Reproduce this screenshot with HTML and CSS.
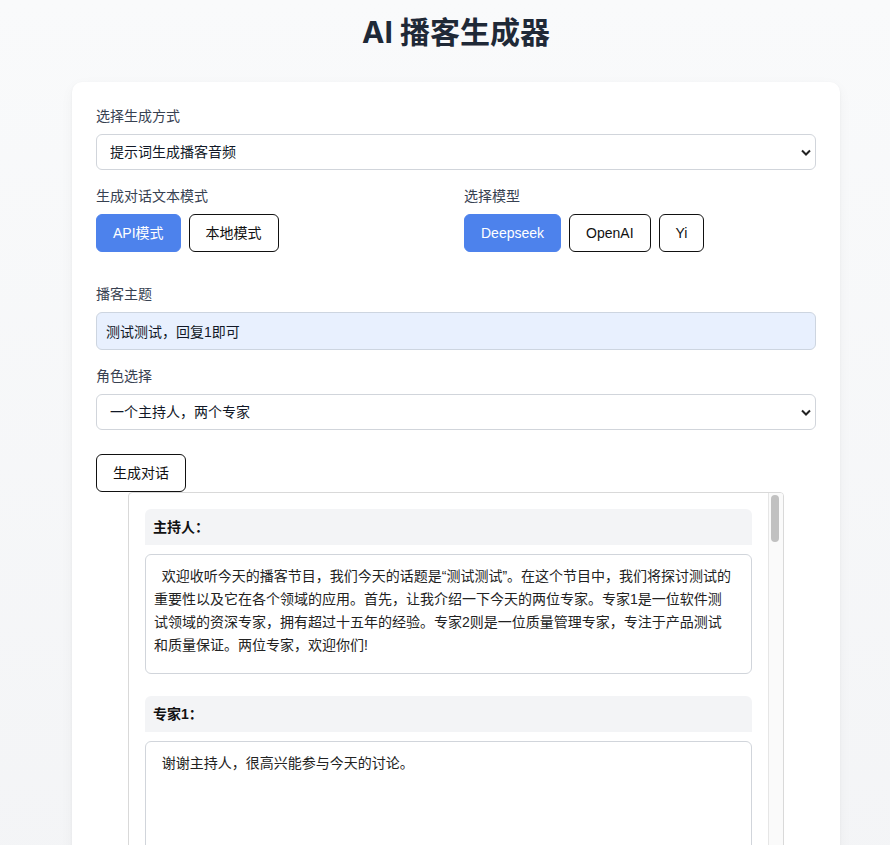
FILE: index.html
```html
<!DOCTYPE html>
<html lang="zh-CN">
<head>
<meta charset="utf-8">
<title>AI 播客生成器</title>
<link rel="stylesheet" href="styles.css">
</head>
<body>
<div class="page">
  <h1 class="title">AI 播客生成器</h1>
  <div class="card">
    <div class="field">
      <label class="label">选择生成方式</label>
      <div class="select-wrap">
        <select class="select"><option>提示词生成播客音频</option></select>
        <svg class="chev" width="10" height="7" viewBox="0 0 10 7"><path d="M1 1.5 L5 5.5 L9 1.5" fill="none" stroke="#222" stroke-width="2"/></svg>
      </div>
    </div>
    <div class="two-col">
      <div>
        <label class="label">生成对话文本模式</label>
        <div class="btn-row">
          <button class="btn btn-primary">API模式</button>
          <button class="btn">本地模式</button>
        </div>
      </div>
      <div>
        <label class="label">选择模型</label>
        <div class="btn-row">
          <button class="btn btn-primary">Deepseek</button>
          <button class="btn">OpenAI</button>
          <button class="btn">Yi</button>
        </div>
      </div>
    </div>
    <div class="field field-topic">
      <label class="label">播客主题</label>
      <input class="input" type="text" value="测试测试，回复1即可">
    </div>
    <div class="field">
      <label class="label">角色选择</label>
      <div class="select-wrap">
        <select class="select"><option>一个主持人，两个专家</option></select>
        <svg class="chev" width="10" height="7" viewBox="0 0 10 7"><path d="M1 1.5 L5 5.5 L9 1.5" fill="none" stroke="#222" stroke-width="2"/></svg>
      </div>
    </div>
    <button class="btn btn-generate">生成对话</button>
    <div class="dialog">
      <div class="dialog-content">
        <div class="entry"><div class="speaker">主持人：</div><textarea class="line">  欢迎收听今天的播客节目，我们今天的话题是“测试测试”。在这个节目中，我们将探讨测试的重要性以及它在各个领域的应用。首先，让我介绍一下今天的两位专家。专家1是一位软件测试领域的资深专家，拥有超过十五年的经验。专家2则是一位质量管理专家，专注于产品测试和质量保证。两位专家，欢迎你们!</textarea></div>
        <div class="entry"><div class="speaker">专家1：</div><textarea class="line">  谢谢主持人，很高兴能参与今天的讨论。</textarea></div>
        <div class="entry"><div class="speaker">专家2：</div><textarea class="line">  谢谢主持人，我也很高兴能和大家一起交流。</textarea></div>
      </div>
      <div class="scrollbar"><div class="thumb"></div></div>
    </div>
  </div>
</div>
</body>
</html>
```
FILE: styles.css
```css
* { box-sizing: border-box; }

html, body {
  margin: 0;
  padding: 0;
}

body {
  min-height: 100vh;
  background: linear-gradient(180deg, #f9fafb 0%, #f3f4f6 100%);
  font-family: Inter, "Noto Sans CJK SC", sans-serif;
  color: #1f2937;
}

.page {
  padding: 14px 0 40px 22px;
}

.title {
  margin: 0;
  text-align: center;
  font-size: 30px;
  line-height: 36px;
  font-weight: 700;
  color: #1f2937;
}

.card {
  width: 768px;
  margin: 32px auto 0;
  background: #fff;
  border-radius: 10px;
  padding: 24px;
  box-shadow: 0 1px 3px rgba(0, 0, 0, 0.05), 0 4px 14px rgba(0, 0, 0, 0.04);
}

.label {
  display: block;
  font-size: 14px;
  line-height: 20px;
  color: #374151;
  margin-bottom: 8px;
}

.field { margin-bottom: 16px; }

.field-topic { margin-top: 32px; }

.select-wrap { position: relative; }

.select {
  -webkit-appearance: none;
  appearance: none;
  width: 100%;
  height: 36px;
  border: 1px solid #d1d5db;
  border-radius: 6px;
  background: #fff;
  padding: 0 30px 0 13px;
  font-family: "Liberation Sans", "Noto Sans CJK SC", sans-serif;
  font-size: 14px;
  color: #111827;
}

.chev {
  position: absolute;
  right: 5px;
  top: 15px;
  pointer-events: none;
}

.two-col {
  display: grid;
  grid-template-columns: 1fr 1fr;
  column-gap: 16px;
}

.btn-row {
  display: flex;
  gap: 8px;
}

.btn {
  height: 38px;
  padding: 0 16px;
  border: 1px solid #111;
  border-radius: 6px;
  background: #fff;
  color: #111;
  font-family: "Liberation Sans", "Noto Sans CJK SC", sans-serif;
  font-size: 14px;
  line-height: 20px;
}

.btn-primary {
  background: #4d82ec;
  border-color: #4d82ec;
  color: #fff;
}

.input {
  display: block;
  width: 100%;
  height: 38px;
  border: 1px solid #cdd5e0;
  border-radius: 6px;
  background: #e8f0fe;
  padding: 0 9px;
  font-family: "Liberation Sans", "Noto Sans CJK SC", sans-serif;
  font-size: 14px;
  color: #111827;
}

.btn-generate {
  display: block;
  margin-top: 24px;
}

.dialog {
  display: flex;
  margin: 0 32px;
  height: 380px;
  border: 1px solid #d9d9d9;
  border-radius: 4px;
  background: #fff;
  overflow: hidden;
}

.dialog-content {
  flex: 1;
  min-width: 0;
  padding: 16px;
  overflow: hidden;
}

.scrollbar {
  width: 15px;
  flex: none;
  background: #fafafa;
  border-left: 1px solid #e6e6e6;
  padding: 2px 4px 0 2px;
}

.thumb {
  height: 47px;
  border-radius: 4px;
  background: #c1c1c1;
}

.entry + .entry { margin-top: 22px; }

.speaker {
  height: 36px;
  line-height: 36px;
  padding: 0 8px;
  background: #f3f4f6;
  border-radius: 6px 6px 0 0;
  font-family: "Liberation Sans", "Noto Sans CJK SC", sans-serif;
  font-size: 14px;
  font-weight: 700;
  color: #111;
}

.line {
  display: block;
  width: 100%;
  height: 120px;
  margin-top: 9px;
  border: 1px solid #d1d5db;
  border-radius: 6px;
  padding: 10px 17px 10px 8px;
  resize: none;
  overflow: hidden;
  font-family: "Liberation Sans", "Noto Sans CJK SC", sans-serif;
  font-size: 14px;
  line-height: 23px;
  color: #222;
  background: #fff;
}
```
